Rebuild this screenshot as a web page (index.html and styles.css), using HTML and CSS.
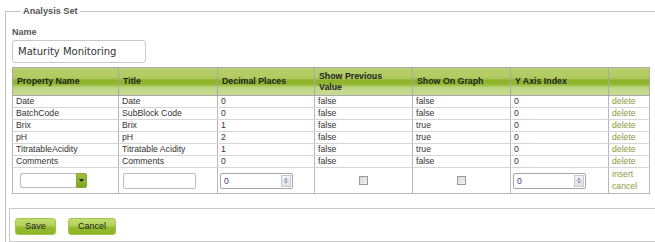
FILE: index.html
```html
<!DOCTYPE html>
<html>
<head>
<meta charset="utf-8">
<link rel="stylesheet" href="styles.css">
</head>
<body>
<fieldset class="set">
  <legend class="set-legend">Analysis Set</legend>
  <div class="name-block">
    <div class="label">Name</div>
    <div class="name-input">Maturity Monitoring</div>
  </div>
  <table class="grid">
    <colgroup>
      <col class="c1"><col class="c2"><col class="c3"><col class="c4"><col class="c5"><col class="c6"><col class="c7">
    </colgroup>
    <thead>
      <tr>
        <th>Property Name</th>
        <th>Title</th>
        <th>Decimal Places</th>
        <th class="wrap">Show Previous Value</th>
        <th>Show On Graph</th>
        <th>Y Axis Index</th>
        <th></th>
      </tr>
    </thead>
    <tbody>
      <tr><td>Date</td><td>Date</td><td>0</td><td>false</td><td>false</td><td>0</td><td class="link">delete</td></tr>
      <tr><td>BatchCode</td><td>SubBlock Code</td><td>0</td><td>false</td><td>false</td><td>0</td><td class="link">delete</td></tr>
      <tr><td>Brix</td><td>Brix</td><td>1</td><td>false</td><td>true</td><td>0</td><td class="link">delete</td></tr>
      <tr><td>pH</td><td>pH</td><td>2</td><td>false</td><td>true</td><td>0</td><td class="link">delete</td></tr>
      <tr><td>TitratableAcidity</td><td>Titratable Acidity</td><td>1</td><td>false</td><td>true</td><td>0</td><td class="link">delete</td></tr>
      <tr><td>Comments</td><td>Comments</td><td>0</td><td>false</td><td>false</td><td>0</td><td class="link">delete</td></tr>
      <tr class="edit">
        <td><div class="combo"><span class="combo-field"></span><span class="combo-btn"><svg width="5" height="3" viewBox="0 0 5 3"><path d="M0 0H5L2.5 3Z" fill="#222"/></svg></span></div></td>
        <td><div class="text-field"></div></td>
        <td><div class="spin"><span class="spin-val">0</span><span class="spin-btn"><svg width="9" height="11" viewBox="0 0 9 11"><path d="M2.5 4.5L4.5 2.5L6.5 4.5Z" fill="#6a7fa8"/><path d="M2.5 6.5L4.5 8.5L6.5 6.5Z" fill="#6a7fa8"/><path d="M1 5.5H8" stroke="#c8ccd4" stroke-width="1"/></svg></span></div></td>
        <td class="center"><span class="check"></span></td>
        <td class="center"><span class="check"></span></td>
        <td><div class="spin"><span class="spin-val">0</span><span class="spin-btn"><svg width="9" height="11" viewBox="0 0 9 11"><path d="M2.5 4.5L4.5 2.5L6.5 4.5Z" fill="#6a7fa8"/><path d="M2.5 6.5L4.5 8.5L6.5 6.5Z" fill="#6a7fa8"/><path d="M1 5.5H8" stroke="#c8ccd4" stroke-width="1"/></svg></span></div></td>
        <td class="link actions"><div>insert</div><div>cancel</div></td>
      </tr>
    </tbody>
  </table>
  <div class="button-box">
    <button class="btn save">Save</button>
    <button class="btn cancel">Cancel</button>
  </div>
</fieldset>
</body>
</html>
```
FILE: styles.css
```css
html, body {
  margin: 0;
  padding: 0;
  background: #fff;
  overflow: hidden;
  height: 242px;
}
body {
  font-family: "Liberation Sans", Arial, sans-serif;
  font-size: 8.7px;
  color: #333;
}
.set {
  margin: 6px 0 0 5px;
  padding: 0 0 0 3px;
  width: 650px;
  border: 1px solid #c4c4c4;
  border-right: none;
  border-bottom: none;
  height: 236px;
  box-sizing: border-box;
}
.set-legend {
  margin-left: 12px;
  padding: 0 2px;
  font-weight: bold;
  font-size: 9.2px;
  color: #555;
  line-height: 11px;
}
.name-block {
  padding: 10px 0 0 3px;
}
.label {
  font-weight: bold;
  color: #555;
  font-size: 9px;
  line-height: 11px;
}
.name-input {
  width: 127px;
  height: 21px;
  margin-top: 2px;
  border: 1px solid #c8c8c8;
  border-radius: 3px;
  box-sizing: content-box;
  font-family: "DejaVu Sans", Verdana, sans-serif;
  font-size: 10px;
  line-height: 21px;
  padding-left: 5px;
  color: #333;
}
.grid {
  margin: 4px 0 0 3px;
  width: 637px;
  border-collapse: collapse;
  table-layout: fixed;
}
.c1 { width: 106px; }
.c2 { width: 99px; }
.c3 { width: 97px; }
.c4 { width: 98px; }
.c5 { width: 98px; }
.c6 { width: 98px; }
.c7 { width: 41px; }
.grid th {
  height: 27px;
  padding: 0 4px;
  text-align: left;
  font-weight: bold;
  font-size: 8.8px;
  line-height: 11px;
  color: #222;
  border: 1px solid #a9a9a9;
  background: linear-gradient(to bottom, #b7cf6a 0%, #b0ca5e 36%, #8ab126 44%, #93b834 60%, #bfd684 70%, #c9dc94 100%);
}
.grid th.wrap {
  padding-right: 14px;
}
.grid td {
  height: 11px;
  padding: 0 3px;
  line-height: 11px;
  border-left: 1px solid #b8b8b8;
  border-right: 1px solid #b8b8b8;
  border-bottom: 1px solid #d6d6d6;
  white-space: nowrap;
  overflow: hidden;
  color: #333;
}
.grid td.link {
  color: #8e9c44;
}
.grid tr.edit td {
  height: 25px;
  border-bottom: 1px solid #b8b8b8;
}
.grid td.center {
  text-align: center;
}
.actions {
  vertical-align: top;
  padding-top: 1px;
}
.actions div {
  line-height: 12px;
}
.combo {
  display: flex;
  width: 67px;
  height: 15px;
  margin-left: 4px;
}
.combo-field {
  flex: 1;
  border: 1px solid #bcbcbc;
  border-right: none;
  border-radius: 3px 0 0 3px;
  background: #fff;
}
.combo-btn {
  width: 9px;
  background: linear-gradient(to bottom, #9cc23c, #7ea521);
  border: 1px solid #8aa838;
  border-radius: 0 2px 2px 0;
  display: flex;
  align-items: center;
  justify-content: center;
}
.text-field {
  width: 71px;
  height: 14px;
  margin-left: 1px;
  border: 1px solid #bcbcbc;
  border-radius: 2px;
  background: #fff;
}
.spin {
  display: flex;
  align-items: center;
  width: 71px;
  height: 14px;
  margin-left: -1px;
  border: 1px solid #a6a6a6;
  border-radius: 2px;
  background: #fff;
}
.spin-val {
  flex: 1;
  padding-left: 3px;
  color: #4a3a6a;
  line-height: 12px;
}
.spin-btn {
  width: 10px;
  height: 12px;
  margin-right: 1px;
  border: 1px solid #c6c9d0;
  box-sizing: border-box;
  background: linear-gradient(to bottom, #f4f5f7, #dfe2e8);
  display: flex;
  align-items: center;
  justify-content: center;
}
.check {
  display: inline-block;
  width: 7px;
  height: 7px;
  border: 1px solid #9a9a9a;
  background: linear-gradient(to bottom right, #d8d8d8, #f2f2f2);
  vertical-align: middle;
}
.button-box {
  margin-top: 14px;
  width: 641px;
  height: 32px;
  border: 1px solid #c8c8c8;
  display: flex;
  align-items: center;
  gap: 12px;
  padding-left: 5px;
  box-sizing: content-box;
}
.btn {
  height: 17px;
  padding: 0;
  border: 1px solid #a5c44a;
  border-radius: 3px;
  font-family: "Liberation Sans", Arial, sans-serif;
  font-size: 9px;
  color: #222;
  background: linear-gradient(to bottom, #c3dc72 0%, #b2d05a 45%, #94bb30 55%, #8cb52a 100%);
  margin-top: 2px;
}
.save { width: 41px; }
.cancel { width: 48px; }
```
